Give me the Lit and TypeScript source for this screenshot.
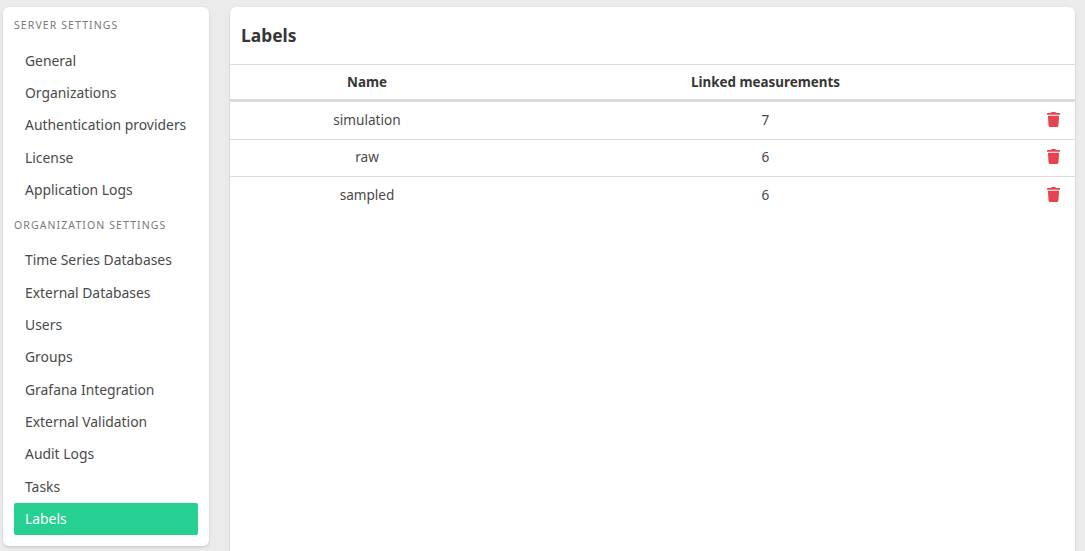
import { LitElement, html, css } from "lit";
import { customElement } from "lit/decorators.js";

const server = ["General", "Organizations", "Authentication providers", "License", "Application Logs"];
const org = ["Time Series Databases", "External Databases", "Users", "Groups", "Grafana Integration", "External Validation", "Audit Logs", "Tasks", "Labels"];
const rows: [string, string][] = [["simulation", "7"], ["raw", "6"], ["sampled", "6"]];

@customElement("app-root")
export class AppRoot extends LitElement {
  static styles = css`
    :host {
      display: block;
      height: 551px;
      overflow: hidden;
      background: #ebebeb;
      font-family: "Noto Sans", "Open Sans", sans-serif;
      color: #363636;
      font-size: 14px;
    }
    .page { display: flex; align-items: flex-start; padding: 7px 10px 0 3px; gap: 21px; }
    .side {
      width: 206px; height: 539px; flex: none; box-sizing: border-box;
      background: #fff; border-radius: 6px; padding: 11px 11px 0;
      box-shadow: 0 2px 3px rgba(10,10,10,.1), 0 0 0 1px rgba(10,10,10,.02);
    }
    .label {
      font-size: 10.5px; letter-spacing: 1.1px; color: #7a7a7a; line-height: 14px; text-transform: uppercase;
    }
    .label.second { margin-top: 12.2px; }
    ul { list-style: none; margin: 12.8px 0 0; padding: 0; }
    ul.org { margin-top: 12px; }
    li {
      height: 32.3px; line-height: 32.3px; padding-left: 11px; border-radius: 2px;
      font-size: 13.9px; white-space: nowrap; color: #4a4a4a;
    }
    li.active { background: #26cf92; color: #fff; height: 32px; }
    .main {
      flex: 1; height: 600px; background: #fff; border-radius: 6px;
      box-shadow: 0 2px 3px rgba(10,10,10,.1), 0 0 0 1px rgba(10,10,10,.02);
    }
    h1 { margin: 0; height: 57px; box-sizing: border-box; padding: 16px 0 0 11px; font-size: 17.4px; line-height: 25px; font-weight: 700; color: #363636; }
    .row { display: grid; grid-template-columns: 274px 523px 1fr; align-items: center; text-align: center; border-top: 1px solid #dbdbdb; height: 37.5px; box-sizing: border-box; font-size: 13.6px; color: #4a4a4a; padding-bottom: 2px; }
    .head { height: 38px; font-weight: 700; font-size: 13.4px; border-bottom: 3px solid #dbdbdb; color: #363636; padding-bottom: 0; }
    .row.first { border-top: 0; height: 37px; padding-bottom: 3px; }
    .row.second { height: 37px; padding-bottom: 3px; }
    .trash { justify-self: end; margin-right: 15px; width: 13px; height: 15px; display: block; }
  `;

  render() {
    return html`<div class="page">
      <nav class="side">
        <div class="label">Server Settings</div>
        <ul>${server.map((s) => html`<li>${s}</li>`)}</ul>
        <div class="label second">Organization Settings</div>
        <ul class="org">${org.map((s) => html`<li class=${s === "Labels" ? "active" : ""}>${s}</li>`)}</ul>
      </nav>
      <main class="main">
        <h1>Labels</h1>
        <div class="row head"><span>Name</span><span>Linked measurements</span><span></span></div>
        ${rows.map(([n, c], i) => html`<div class="row ${i === 0 ? "first" : i === 1 ? "second" : ""}">
          <span>${n}</span><span>${c}</span>
          <svg class="trash" viewBox="0 0 448 512" fill="#e5434f"><path d="M432 32H312l-9.400-18.700A24 24 0 0 0 281.100 0H166.800a23.700 23.700 0 0 0-21.400 13.300L136 32H16A16 16 0 0 0 0 48v32a16 16 0 0 0 16 16h416a16 16 0 0 0 16-16V48a16 16 0 0 0-16-16zM53.200 467a48 48 0 0 0 47.900 45h245.800a48 48 0 0 0 47.900-45L416 128H32z"/></svg>
        </div>`)}
      </main>
    </div>`;
  }
}
